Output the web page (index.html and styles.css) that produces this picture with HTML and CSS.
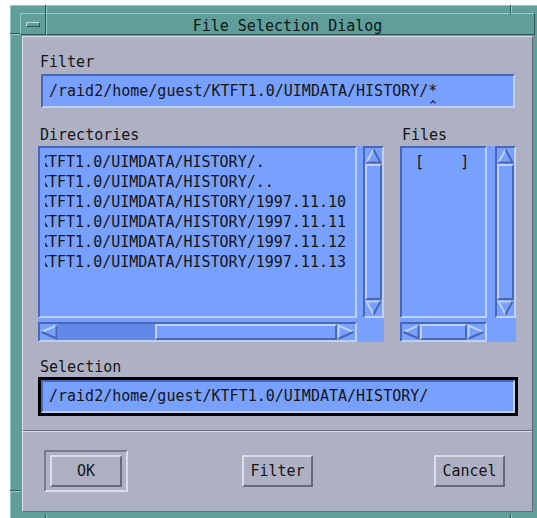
FILE: index.html
```html
<!DOCTYPE html>
<html lang="en">
<head>
<meta charset="utf-8">
<title>File Selection Dialog</title>
<link rel="stylesheet" href="styles.css">
</head>
<body>
<div class="window">
  <!-- resize-corner marks cut into the window border -->
  <span class="notch notch-v notch-tl"></span>
  <span class="notch notch-v notch-tr"></span>
  <span class="notch notch-h notch-lt"></span>
  <span class="notch notch-h notch-lb"></span>
  <span class="notch notch-v notch-bl"></span>
  <span class="notch notch-v notch-br"></span>

  <div class="client">
    <div class="titlebar">
      <div class="menu-btn"><span class="menu-bar"></span></div>
      <div class="title">File Selection Dialog</div>
    </div>

    <div class="dialog">
      <div class="work">
        <div class="label">Filter</div>
        <div class="field filter-field">/raid2/home/guest/KTFT1.0/UIMDATA/HISTORY/<span class="cursor">*</span></div>

        <div class="lists">
          <div class="col col-dirs">
            <div class="label">Directories</div>
            <div class="scrolled dirs">
              <div class="list">
                <div class="rows rows-dirs">
                  <div>/raid2/home/guest/KTFT1.0/UIMDATA/HISTORY/.</div>
                  <div>/raid2/home/guest/KTFT1.0/UIMDATA/HISTORY/..</div>
                  <div>/raid2/home/guest/KTFT1.0/UIMDATA/HISTORY/1997.11.10</div>
                  <div>/raid2/home/guest/KTFT1.0/UIMDATA/HISTORY/1997.11.11</div>
                  <div>/raid2/home/guest/KTFT1.0/UIMDATA/HISTORY/1997.11.12</div>
                  <div>/raid2/home/guest/KTFT1.0/UIMDATA/HISTORY/1997.11.13</div>
                </div>
              </div>
              <div class="vscroll">
                <div class="arrow arrow-v">
                  <svg viewBox="0 0 17 16" width="17" height="16"><polygon points="8.5,1.5 15.5,14.5 1.5,14.5" fill="#78a0ff"/><polyline points="1.5,14.5 8.5,1.5" class="lt"/><polyline points="8.5,1.5 15.5,14.5 1.5,14.5" class="dk"/></svg>
                </div>
                <div class="trough trough-v"><div class="thumb thumb-full"></div></div>
                <div class="arrow arrow-v">
                  <svg viewBox="0 0 17 16" width="17" height="16"><polygon points="1.5,1.5 15.5,1.5 8.5,14.5" fill="#78a0ff"/><polyline points="8.5,14.5 1.5,1.5 15.5,1.5" class="lt"/><polyline points="15.5,1.5 8.5,14.5" class="dk"/></svg>
                </div>
              </div>
              <div class="hscroll">
                <div class="arrow arrow-h">
                  <svg viewBox="0 0 18 16" width="18" height="16"><polygon points="1.5,8 16.5,1.5 16.5,14.5" fill="#78a0ff"/><polyline points="1.5,8 16.5,1.5" class="lt"/><polyline points="16.5,1.5 16.5,14.5 1.5,8" class="dk"/></svg>
                </div>
                <div class="trough trough-h"><div class="thumb thumb-dirs"></div></div>
                <div class="arrow arrow-h">
                  <svg viewBox="0 0 18 16" width="18" height="16"><polygon points="1.5,1.5 16.5,8 1.5,14.5" fill="#78a0ff"/><polyline points="1.5,14.5 1.5,1.5 16.5,8" class="lt"/><polyline points="16.5,8 1.5,14.5" class="dk"/></svg>
                </div>
              </div>
            </div>
          </div>

          <div class="col col-files">
            <div class="label">Files</div>
            <div class="scrolled files">
              <div class="list">
                <div class="rows rows-files">
                  <div>[    ]</div>
                </div>
              </div>
              <div class="vscroll">
                <div class="arrow arrow-v">
                  <svg viewBox="0 0 17 16" width="17" height="16"><polygon points="8.5,1.5 15.5,14.5 1.5,14.5" fill="#78a0ff"/><polyline points="1.5,14.5 8.5,1.5" class="lt"/><polyline points="8.5,1.5 15.5,14.5 1.5,14.5" class="dk"/></svg>
                </div>
                <div class="trough trough-v"><div class="thumb thumb-full"></div></div>
                <div class="arrow arrow-v">
                  <svg viewBox="0 0 17 16" width="17" height="16"><polygon points="1.5,1.5 15.5,1.5 8.5,14.5" fill="#78a0ff"/><polyline points="8.5,14.5 1.5,1.5 15.5,1.5" class="lt"/><polyline points="15.5,1.5 8.5,14.5" class="dk"/></svg>
                </div>
              </div>
              <div class="hscroll">
                <div class="arrow arrow-h">
                  <svg viewBox="0 0 18 16" width="18" height="16"><polygon points="1.5,8 16.5,1.5 16.5,14.5" fill="#78a0ff"/><polyline points="1.5,8 16.5,1.5" class="lt"/><polyline points="16.5,1.5 16.5,14.5 1.5,8" class="dk"/></svg>
                </div>
                <div class="trough trough-h"><div class="thumb thumb-full"></div></div>
                <div class="arrow arrow-h">
                  <svg viewBox="0 0 18 16" width="18" height="16"><polygon points="1.5,1.5 16.5,8 1.5,14.5" fill="#78a0ff"/><polyline points="1.5,14.5 1.5,1.5 16.5,8" class="lt"/><polyline points="16.5,8 1.5,14.5" class="dk"/></svg>
                </div>
              </div>
            </div>
          </div>
        </div>

        <div class="label label-sel">Selection</div>
        <div class="sel-frame">
          <div class="field sel-field">/raid2/home/guest/KTFT1.0/UIMDATA/HISTORY/</div>
        </div>
      </div>

      <div class="separator"></div>

      <div class="actions">
        <div class="default-ring"><button class="btn btn-ok">OK</button></div>
        <button class="btn btn-filter">Filter</button>
        <button class="btn btn-cancel">Cancel</button>
      </div>
    </div>
  </div>
</div>
</body>
</html>
```
FILE: styles.css
```css
* {
  box-sizing: border-box;
}

html,
body {
  margin: 0;
  padding: 0;
}

body {
  width: 537px;
  height: 518px;
  overflow: hidden;
  background: #ffffff;
  font-family: "DejaVu Sans Mono", "Liberation Mono", monospace;
  font-size: 15px;
  color: #151515;
}

/* ---- window manager frame ---- */
.window {
  position: relative;
  margin: 5px 0 0 10px;
  width: 535px;
  height: 519px;
  background: #5f9e99;
  border: 1px solid;
  border-color: #94c9c4 #2e5854 #2e5854 #94c9c4;
  padding: 7px 9px 9px 9px;
}

.notch {
  position: absolute;
}

.notch-v {
  width: 2px;
  height: 9px;
  border-left: 1px solid #2e5854;
  border-right: 1px solid #94c9c4;
}

.notch-h {
  width: 10px;
  height: 2px;
  border-top: 1px solid #2e5854;
  border-bottom: 1px solid #94c9c4;
}

.notch-tl { top: -1px; left: 34px; }
.notch-tr { top: -1px; left: 499px; }
.notch-lt { left: -1px; top: 27px; }
.notch-lb { left: -1px; top: 484px; }
.notch-bl { top: 508px; left: 34px; height: 12px; }
.notch-br { top: 508px; left: 499px; height: 12px; }

.client {
  height: 100%;
  display: flex;
  flex-direction: column;
}

.titlebar {
  display: flex;
  height: 22px;
  flex: none;
}

.menu-btn {
  width: 26px;
  border: 1px solid;
  border-color: #94c9c4 #2e5854 #2e5854 #94c9c4;
  display: flex;
  align-items: center;
  justify-content: center;
}

.menu-bar {
  width: 14px;
  height: 5px;
  border: 1px solid;
  border-color: #b9dfdb #2e5854 #2e5854 #b9dfdb;
}

.title {
  flex: 1;
  border: 1px solid;
  border-color: #94c9c4 #2e5854 #2e5854 #94c9c4;
  text-align: center;
  padding: 2px 6px 0 0;
  line-height: 20px;
  color: #0c1716;
  white-space: pre;
}

/* ---- dialog body ---- */
.dialog {
  flex: 1;
  margin: 1px 2px 2px 2px;
  background: #aeb0c4;
  border: 1px solid;
  border-color: #dadce7 #676a7b #676a7b #dadce7;
  display: flex;
  flex-direction: column;
}

.work {
  padding: 17px 14px 0 15px;
}

.label {
  line-height: 17px;
  margin-left: 2px;
  white-space: pre;
}

.field {
  background: #78a0ff;
  border: 2px solid;
  border-color: #4a66b4 #bdd0ff #bdd0ff #4a66b4;
  padding: 0 6px;
  white-space: pre;
  overflow: hidden;
}

.filter-field {
  margin: 3px 3px 0 3px;
  height: 34px;
  line-height: 30px;
}

.cursor {
  position: relative;
}

.cursor::after {
  content: "";
  position: absolute;
  left: 3px;
  top: 19px;
  width: 3px;
  height: 3px;
  border-top: 1px solid #151515;
  border-left: 1px solid #151515;
  transform: rotate(45deg);
}

/* ---- directory / file lists ---- */
.lists {
  display: flex;
  gap: 16px;
  margin-top: 19px;
}

.col-dirs {
  width: 346px;
}

.col-files {
  width: 116px;
}

.scrolled {
  margin-top: 2px;
  display: grid;
  grid-template-rows: 172px 20px;
  row-gap: 4px;
  background: #78a0ff;
}

.dirs {
  grid-template-columns: 319px 21px;
  column-gap: 6px;
}

.files {
  grid-template-columns: 87px 21px;
  column-gap: 8px;
}

.list {
  border: 2px solid;
  border-color: #4a66b4 #bdd0ff #bdd0ff #4a66b4;
  padding: 4px 5px;
}

.rows {
  height: 100%;
  overflow: hidden;
  line-height: 20px;
}

.rows div {
  white-space: pre;
}

.rows-dirs div {
  margin-left: -168.6px;
}

.rows-files div {
  margin-left: 8px;
}

.vscroll,
.hscroll {
  border: 2px solid;
  border-color: #4a66b4 #bdd0ff #bdd0ff #4a66b4;
  background: #6289e8;
  display: flex;
}

.vscroll {
  flex-direction: column;
}

.arrow {
  flex: none;
  display: flex;
  background: #78a0ff;
}

.arrow-v {
  height: 16px;
}

.arrow-h {
  width: 18px;
}

.arrow svg {
  display: block;
}

.arrow .lt {
  fill: none;
  stroke: #bdd0ff;
  stroke-width: 2;
  stroke-linejoin: miter;
}

.arrow .dk {
  fill: none;
  stroke: #4a66b4;
  stroke-width: 2;
  stroke-linejoin: miter;
}

.trough {
  flex: 1;
  display: flex;
}

.trough-h {
  justify-content: flex-end;
}

.thumb {
  background: #78a0ff;
  border: 2px solid;
  border-color: #bdd0ff #4a66b4 #4a66b4 #bdd0ff;
}

.thumb-full {
  flex: 1;
}

.thumb-dirs {
  width: 182px;
}

/* ---- selection ---- */
.label-sel {
  margin-top: 17px;
}

.sel-frame {
  margin-top: 1px;
  border: 3px solid #000000;
}

.sel-field {
  height: 33px;
  line-height: 29px;
}

/* ---- action area ---- */
.separator {
  margin-top: 14px;
  height: 2px;
  border-top: 1px solid #676a7b;
  border-bottom: 1px solid #dadce7;
}

.actions {
  display: flex;
  align-items: center;
  margin-top: 18px;
}

.default-ring {
  margin-left: 21px;
  width: 84px;
  height: 42px;
  border: 2px solid;
  border-color: #7a7c8d #dadce7 #dadce7 #7a7c8d;
  padding: 3px 4px;
}

.btn {
  display: block;
  margin: 0;
  padding: 0;
  width: 71px;
  height: 32px;
  background: #aeb0c4;
  border: 2px solid;
  border-color: #dadce7 #676a7b #676a7b #dadce7;
  font: inherit;
  line-height: 28px;
  color: #151515;
  text-align: center;
}

.btn-ok {
  width: 72px;
}

.btn-filter {
  margin-left: 114px;
}

.btn-cancel {
  margin-left: 121px;
}
```
